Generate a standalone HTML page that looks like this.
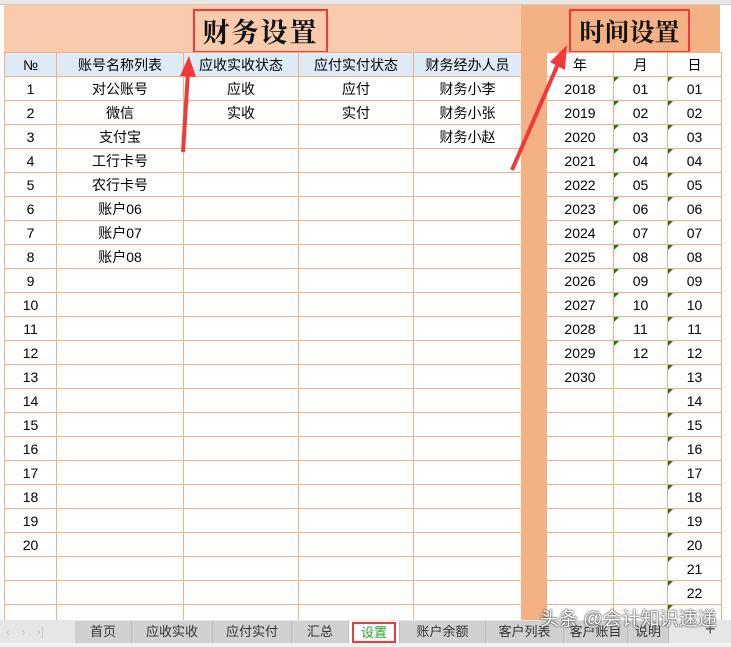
<!DOCTYPE html>
<html><head><meta charset="utf-8"><style>
body{margin:0;width:731px;height:647px;overflow:hidden;background:#fff;position:relative;font-family:"Liberation Sans","Noto Sans CJK SC",sans-serif;}
.a{position:absolute}
table{border-collapse:collapse;position:absolute;table-layout:fixed}
td{border:1px solid #F4B084;height:23px;padding:0;text-align:center;font-size:14px;color:#000;white-space:nowrap;position:relative}
td.g::before{content:"";position:absolute;left:0;top:0;border-top:5px solid #1a7a1a;border-right:5px solid transparent}
.tab{position:absolute;top:621px;height:22px;line-height:22px;font-size:13px;color:#333;background:#d0d0d0;border-right:1px solid #bbb;text-align:center}
</style></head><body>
<div class="a" style="left:0;top:0;width:731px;height:4px;background:#e8e8e8;border-bottom:1px solid #ccc"></div>
<div class="a" style="left:4px;top:5px;width:517px;height:47px;background:#F8CBAD"></div>
<div class="a" style="left:521px;top:5px;width:199px;height:47px;background:#F4B183"></div>
<div class="a" style="left:521px;top:52px;width:25px;height:569px;background:#F4B183"></div>
<div class="a" style="left:193px;top:9px;width:131px;height:40px;border:2px solid #f03a3a;font:bold 27px 'Noto Serif CJK SC',serif;text-align:center;line-height:40px;letter-spacing:2px;color:#111">财务设置</div>
<div class="a" style="left:569px;top:9px;width:117px;height:40px;border:2px solid #f03a3a;font:bold 25px 'Noto Serif CJK SC',serif;text-align:center;line-height:40px;color:#111">时间设置</div>
<table style="left:4px;top:52px;width:518px">
<colgroup><col style="width:52px"><col style="width:127px"><col style="width:115px"><col style="width:115px"><col style="width:108px"></colgroup>
<tr style="background:#DDEBF7"><td>№</td><td>账号名称列表</td><td>应收实收状态</td><td>应付实付状态</td><td>财务经办人员</td></tr>
<tr><td>1</td><td>对公账号</td><td>应收</td><td>应付</td><td>财务小李</td></tr>
<tr><td>2</td><td>微信</td><td>实收</td><td>实付</td><td>财务小张</td></tr>
<tr><td>3</td><td>支付宝</td><td></td><td></td><td>财务小赵</td></tr>
<tr><td>4</td><td>工行卡号</td><td></td><td></td><td></td></tr>
<tr><td>5</td><td>农行卡号</td><td></td><td></td><td></td></tr>
<tr><td>6</td><td>账户06</td><td></td><td></td><td></td></tr>
<tr><td>7</td><td>账户07</td><td></td><td></td><td></td></tr>
<tr><td>8</td><td>账户08</td><td></td><td></td><td></td></tr>
<tr><td>9</td><td></td><td></td><td></td><td></td></tr>
<tr><td>10</td><td></td><td></td><td></td><td></td></tr>
<tr><td>11</td><td></td><td></td><td></td><td></td></tr>
<tr><td>12</td><td></td><td></td><td></td><td></td></tr>
<tr><td>13</td><td></td><td></td><td></td><td></td></tr>
<tr><td>14</td><td></td><td></td><td></td><td></td></tr>
<tr><td>15</td><td></td><td></td><td></td><td></td></tr>
<tr><td>16</td><td></td><td></td><td></td><td></td></tr>
<tr><td>17</td><td></td><td></td><td></td><td></td></tr>
<tr><td>18</td><td></td><td></td><td></td><td></td></tr>
<tr><td>19</td><td></td><td></td><td></td><td></td></tr>
<tr><td>20</td><td></td><td></td><td></td><td></td></tr>
<tr><td></td><td></td><td></td><td></td><td></td></tr>
<tr><td></td><td></td><td></td><td></td><td></td></tr>
<tr><td></td><td></td><td></td><td></td><td></td></tr>
</table>
<table style="left:546px;top:52px;width:175px">
<colgroup><col style="width:67px"><col style="width:54px"><col style="width:54px"></colgroup>
<tr><td>年</td><td>月</td><td>日</td></tr>
<tr><td>2018</td><td class="g">01</td><td class="g">01</td></tr>
<tr><td>2019</td><td class="g">02</td><td class="g">02</td></tr>
<tr><td>2020</td><td class="g">03</td><td class="g">03</td></tr>
<tr><td>2021</td><td class="g">04</td><td class="g">04</td></tr>
<tr><td>2022</td><td class="g">05</td><td class="g">05</td></tr>
<tr><td>2023</td><td class="g">06</td><td class="g">06</td></tr>
<tr><td>2024</td><td class="g">07</td><td class="g">07</td></tr>
<tr><td>2025</td><td class="g">08</td><td class="g">08</td></tr>
<tr><td>2026</td><td class="g">09</td><td class="g">09</td></tr>
<tr><td>2027</td><td class="g">10</td><td class="g">10</td></tr>
<tr><td>2028</td><td class="g">11</td><td class="g">11</td></tr>
<tr><td>2029</td><td class="g">12</td><td class="g">12</td></tr>
<tr><td>2030</td><td></td><td class="g">13</td></tr>
<tr><td></td><td></td><td class="g">14</td></tr>
<tr><td></td><td></td><td class="g">15</td></tr>
<tr><td></td><td></td><td class="g">16</td></tr>
<tr><td></td><td></td><td class="g">17</td></tr>
<tr><td></td><td></td><td class="g">18</td></tr>
<tr><td></td><td></td><td class="g">19</td></tr>
<tr><td></td><td></td><td class="g">20</td></tr>
<tr><td></td><td></td><td class="g">21</td></tr>
<tr><td></td><td></td><td class="g">22</td></tr>
<tr><td></td><td></td><td class="g"></td></tr>
</table>
<svg class="a" style="left:0;top:0" width="731" height="647">
<path d="M183 152 L188 72" stroke="#f03a3a" stroke-width="4" fill="none"/>
<path d="M180 76 L189 56 L196 77 Z" fill="#f03a3a"/>
<path d="M512 170 L558 64" stroke="#f03a3a" stroke-width="4" fill="none"/>
<path d="M550 62 L567 45 L565 70 Z" fill="#f03a3a"/>
</svg>
<div class="a" style="left:0;top:620px;width:731px;height:23px;background:#e6e6e6"></div>
<div class="a" style="left:0;top:643px;width:731px;height:4px;background:#f2f2f2"></div>
<div class="a" style="left:6px;top:621px;font-size:13px;color:#ccc;line-height:22px">‹&nbsp;&nbsp;&nbsp;›&nbsp;&nbsp;&nbsp;›|</div>
<div class="tab" style="left:75px;width:56px">首页</div>
<div class="tab" style="left:132px;width:80px">应收实收</div>
<div class="tab" style="left:213px;width:78px">应付实付</div>
<div class="tab" style="left:292px;width:56px">汇总</div>
<div class="tab" style="left:349px;width:50px;background:#fff;color:#2aa52a"><span style="display:inline-block;border:2px solid #f03a3a;width:40px;height:17px;line-height:17px;margin-top:1px">设置</span></div>
<div class="tab" style="left:400px;width:85px">账户余额</div>
<div class="tab" style="left:486px;width:77px">客户列表</div>
<div class="tab" style="left:564px;width:63px">客户账目</div>
<div class="tab" style="left:628px;width:40px">说明</div>
<div class="a" style="left:705px;top:619px;font-size:18px;color:#555">+</div>
<div class="a" style="left:540px;top:604px;font-size:19px;color:#fff;text-shadow:0 0 2px #333,0 0 1px #000">头条 @会计知识速递</div>
</body></html>
